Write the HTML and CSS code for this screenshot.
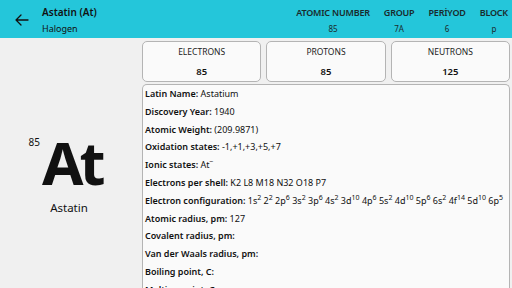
FILE: index.html
```html
<!DOCTYPE html>
<html>
<head>
<meta charset="utf-8">
<link rel="stylesheet" href="styles.css">
</head>
<body>
<header class="topbar">
  <div class="back">
    <svg width="14" height="12" viewBox="0 0 14 12"><path d="M6 1 L1 6 L6 11 M1 6 H13" fill="none" stroke="#111" stroke-width="1.3" stroke-linecap="round" stroke-linejoin="round"/></svg>
  </div>
  <div class="title">
    <div class="name">Astatin (At)</div>
    <div class="sub">Halogen</div>
  </div>
  <div class="stats">
    <div class="stat"><div class="k">ATOMIC NUMBER</div><div class="v">85</div></div>
    <div class="stat"><div class="k">GROUP</div><div class="v">7A</div></div>
    <div class="stat"><div class="k">PERİYOD</div><div class="v">6</div></div>
    <div class="stat"><div class="k">BLOCK</div><div class="v">p</div></div>
  </div>
</header>
<main class="content">
  <section class="symbolpane">
    <div class="symbolwrap">
      <span class="num">85</span>
      <span class="sym">At</span>
    </div>
    <div class="elname">Astatin</div>
  </section>
  <section class="right">
    <div class="counts">
      <div class="card"><div class="ck">ELECTRONS</div><div class="cv">85</div></div>
      <div class="card"><div class="ck">PROTONS</div><div class="cv">85</div></div>
      <div class="card"><div class="ck">NEUTRONS</div><div class="cv">125</div></div>
    </div>
    <div class="details">
      <div class="row"><b>Latin Name:</b> Astatium</div>
      <div class="row"><b>Discovery Year:</b> 1940</div>
      <div class="row"><b>Atomic Weight:</b> (209.9871)</div>
      <div class="row"><b>Oxidation states:</b> -1,+1,+3,+5,+7</div>
      <div class="row"><b>Ionic states:</b> At<sup>−</sup></div>
      <div class="row"><b>Electrons per shell:</b> K2 L8 M18 N32 O18 P7</div>
      <div class="row"><b>Electron configuration:</b> 1s<sup>2</sup> 2<sup>2</sup> 2p<sup>6</sup> 3s<sup>2</sup> 3p<sup>6</sup> 4s<sup>2</sup> 3d<sup>10</sup> 4p<sup>6</sup> 5s<sup>2</sup> 4d<sup>10</sup> 5p<sup>6</sup> 6s<sup>2</sup> 4f<sup>14</sup> 5d<sup>10</sup> 6p<sup>5</sup></div>
      <div class="row"><b>Atomic radius, pm:</b> 127</div>
      <div class="row"><b>Covalent radius, pm:</b></div>
      <div class="row"><b>Van der Waals radius, pm:</b></div>
      <div class="row"><b>Boiling point, C:</b></div>
      <div class="row"><b>Melting point, C:</b></div>
    </div>
  </section>
</main>
</body>
</html>
```
FILE: styles.css
```css
* { box-sizing: border-box; }
html, body { margin: 0; padding: 0; }
body {
  width: 512px; height: 288px; overflow: hidden;
  background: #f0f0f0;
  font-family: "Noto Sans", "DejaVu Sans", sans-serif;
  color: #111;
}
.topbar {
  height: 38px;
  background: #24c6da;
  display: flex;
  align-items: stretch;
}
.back {
  width: 42px;
  display: flex; align-items: center; justify-content: center;
  padding-left: 2px; padding-top: 2px;
}
.title { flex: 1; display: flex; flex-direction: column; padding-top: 5px; }
.name { font-size: 10px; font-weight: 600; line-height: 14px; }
.sub { font-size: 9px; line-height: 12px; margin-top: 4px; }
.stats { display: flex; gap: 14px; padding-right: 4px; padding-top: 6px; }
.stat { display: flex; flex-direction: column; align-items: center; }
.k { font-size: 9px; font-weight: 600; line-height: 13px; letter-spacing: -0.2px; color: #1a2a2c; }
.v { font-size: 8px; line-height: 12px; margin-top: 4px; color: #1a2a2c; }
.content { display: flex; height: 250px; }
.symbolpane {
  width: 140px;
  display: flex; flex-direction: column; align-items: center;
  padding-top: 95px;
}
.symbolwrap { display: flex; align-items: flex-start; margin-left: -10px; }
.num { font-size: 10px; line-height: 12px; margin-top: 3px; margin-right: 2px; }
.sym { font-size: 60px; font-weight: 700; line-height: 58px; letter-spacing: -4px; }
.elname { font-size: 11.5px; line-height: 16px; margin-top: 9px; margin-left: -2px; }
.right { flex: 1; padding: 3px 2px 0 2px; display: flex; flex-direction: column; gap: 2px; }
.counts { display: flex; gap: 5px; }
.card {
  flex: 1; height: 41px;
  background: #fafafa;
  border: 1.5px solid #b4b4b4;
  border-radius: 5px;
  display: flex; flex-direction: column; align-items: center;
  padding-top: 4px;
}
.ck { font-size: 8.5px; line-height: 12px; color: #222; }
.cv { font-size: 9.5px; font-weight: 600; line-height: 13px; margin-top: 7px; }
.details {
  flex: 1;
  background: #fafafa;
  border: 1.5px solid #b4b4b4;
  border-bottom: none;
  border-radius: 5px 5px 0 0;
  padding: 0 2px;
}
.row { font-size: 9px; line-height: 17.8px; height: 17.8px; white-space: nowrap; }
.row b { font-weight: 600; }
.row sup { font-size: 7px; line-height: 0; vertical-align: 4px; }
```
